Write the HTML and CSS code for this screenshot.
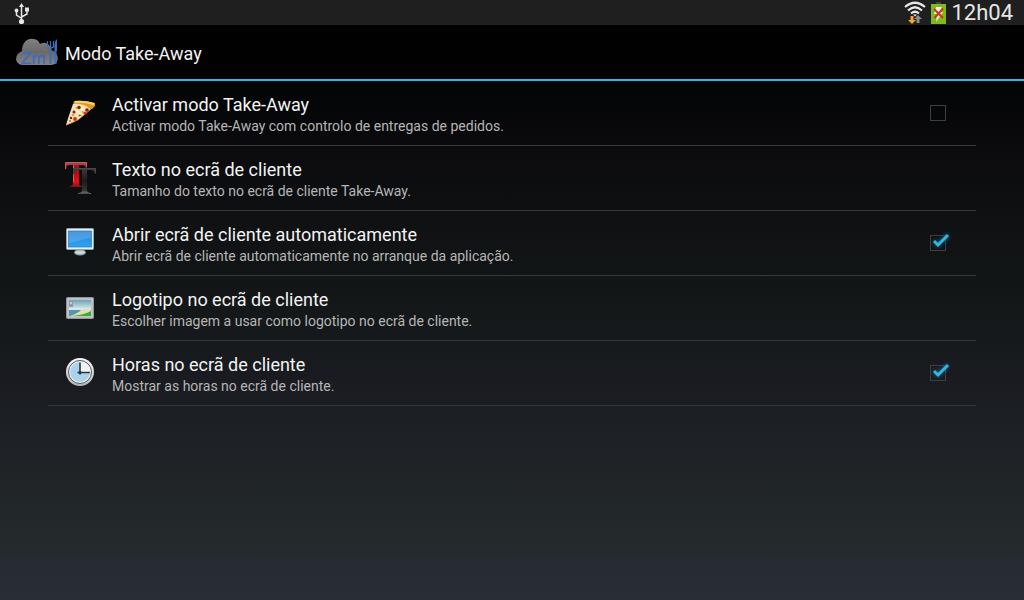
FILE: index.html
```html
<!DOCTYPE html>
<html lang="pt">
<head>
<meta charset="utf-8">
<meta name="viewport" content="width=device-width, initial-scale=1">
<title>Modo Take-Away</title>
<link rel="stylesheet" href="styles.css">
</head>
<body>
<div class="status-bar">
  <svg class="usb" width="16" height="22" viewBox="0 0 16 22" fill="none" stroke="#e6e6e6" stroke-width="1.5" aria-hidden="true">
    <path d="M7.5 3v15M7.5 15.5L2.5 12V8M7.5 14l5.500-3V7"/>
    <path d="M7.500 0l2.500 4H5zM11 4.500h4v4h-4z" fill="#e6e6e6" stroke="none"/>
    <circle cx="2.500" cy="7.500" r="1.900" fill="#e6e6e6" stroke="none"/>
    <circle cx="7.500" cy="18.500" r="2.600" fill="#e6e6e6" stroke="none"/>
  </svg>
  <div class="status-right">
    <svg width="22" height="24" viewBox="0 0 22 24" aria-hidden="true">
      <g fill="none" stroke="#e6e6e6" stroke-width="2.200">
        <path d="M1 6Q11-2.500 21 6M4 9.500Q11 3 18 9.500M7 12.500Q11 9 15 12.500"/>
      </g>
      <path d="M9 13.500h4l-2 2z" fill="#e6e6e6"/>
      <path d="M6.500 15h3v4H12l-4 4-4-4h2.500z" fill="#f2a33c"/>
      <path d="M12.500 22h3v-4H18l-4-4-4 4h2.500z" fill="#8b8b8b"/>
    </svg>
    <svg width="15" height="22" viewBox="0 0 15 22" aria-hidden="true">
      <path d="M5 0h5v3H5z" fill="#444"/>
      <path d="M0 2h15v20H0z" fill="#7fba1c"/>
      <path d="M5 5h6L9 10h3l-7 10 1-8H3z" fill="#e8efda"/>
      <path d="M3 7l9 9M12 6.500L3.500 16" stroke="#d5321b" stroke-width="2"/>
    </svg>
    <time class="clock">12h04</time>
  </div>
</div>
<header class="action-bar">
  <svg class="logo" width="42" height="30" viewBox="0 0 42 30" role="img" aria-label="Zml">
    <defs><linearGradient id="cloud" x1="0" y1="0" x2="0" y2="1"><stop offset="0" stop-color="#808080"/><stop offset=".5" stop-color="#6a6a6a"/><stop offset="1" stop-color="#858585"/></linearGradient></defs>
    <path d="M7 28C-2 28-2 17 6 14C6 5 12 1 17 2Q22 2 24 7Q29 4 33 8Q36 10 35 13C44 15 44 28 35 28Z" fill="url(#cloud)"/>
    <text class="logo-text" x="5" y="27">Zm</text>
    <g fill="none" stroke="#3d6dbb">
      <path d="M34.500 12v15" stroke-width="2"/>
      <path d="M31.500 4v5q0 2 3 2t3-2V4M34.500 4v8" stroke-width="1.200"/>
    </g>
    <path d="M38.500 27V13q-1-8 2.500-11v12H40.500v13z" fill="#3d6dbb"/>
  </svg>
  <h1 class="title">Modo Take-Away</h1>
</header>
<main class="settings">
  <label class="row">
    <svg class="icon" width="32" height="32" viewBox="0 0 32 32" aria-hidden="true">
      <path d="M10 4Q20 3 31 6V9L28 12Q19 8 9 8z" fill="#e19a21"/>
      <path d="M11 5Q20 4 30 7" fill="none" stroke="#fbd469" stroke-width="2"/>
      <path d="M9 7Q19 6 27 12L14 23Q8 26 2 28Q5 18 9 7z" fill="#f6e3ae"/>
      <path d="M2 28Q8 26 15 22L28 11" fill="none" stroke="#e5a13a"/>
      <g fill="#812018"><circle cx="15" cy="10.500" r="1.700"/><circle cx="23" cy="13" r="1.800"/><circle cx="10" cy="15" r="1.500"/><circle cx="16" cy="19" r="1.300"/><circle cx="7" cy="21" r="1.200"/><circle cx="6" cy="24" r=".8"/></g>
      <g fill="#e12c1b"><circle cx="21" cy="16" r="1.600"/><circle cx="11" cy="22" r="1.900"/><circle cx="9" cy="18" r=".8"/></g>
      <path d="M12 14l3 1M17 14l2-3M14 21l3-2" stroke="#fffbe4" stroke-width="1.500"/>
      <path d="M18 14l1 2M12 10l1 2" stroke="#86964b"/>
    </svg>
    <span class="text"><span class="name">Activar modo Take-Away</span><span class="summary">Activar modo Take-Away com controlo de entregas de pedidos.</span></span>
    <span class="check"><input class="box" type="checkbox"><svg class="tick" width="18" height="16" viewBox="0 0 18 16" aria-hidden="true"><path d="M2 8l4 4L16 2"/></svg></span>
  </label>
  <button class="row" type="button">
    <svg class="icon" width="32" height="32" viewBox="0 0 32 32" aria-hidden="true">
      <defs><linearGradient id="red" x1="0" y1="0" x2="0" y2="1"><stop offset="0" stop-color="#8c2226"/><stop offset=".4" stop-color="#b50b12"/><stop offset=".8" stop-color="#ed0d16"/><stop offset="1" stop-color="#7c1216"/></linearGradient>
      <linearGradient id="dark" x1="0" y1="0" x2="0" y2="1"><stop offset="0" stop-color="#3c3c3c"/><stop offset=".5" stop-color="#1b1b1b"/><stop offset=".85" stop-color="#333"/><stop offset="1" stop-color="#777"/></linearGradient></defs>
      <path d="M1 0h22v7h-1q-1-4-4-4h-3v18q0 3 3 3v1H6v-1q3 0 3-3V3H6Q3 3 2 7H1z" fill="url(#red)"/>
      <path d="M1.500 7V.500h21V5M2 2h20M9.500 3v17" fill="none" stroke="#bd6264"/>
      <path d="M9 6h23v6h-1q-1-4-4-4h-4v20q0 3 4 3v1H14v-1q4 0 4-3V8h-4q-3 0-4 4H9z" fill="url(#dark)"/>
      <path d="M9.500 11V6.500h22V11M15 31.500h11" fill="none" stroke="#4c4c4c" stroke-width=".8"/>
    </svg>
    <span class="text"><span class="name">Texto no ecrã de cliente</span><span class="summary">Tamanho do texto no ecrã de cliente Take-Away.</span></span>
  </button>
  <label class="row">
    <svg class="icon" width="32" height="32" viewBox="0 0 32 32" aria-hidden="true">
      <defs><linearGradient id="screen" x1="0" y1="0" x2="0" y2="1"><stop offset="0" stop-color="#2d84d8"/><stop offset="1" stop-color="#2ba2f5"/></linearGradient></defs>
      <path d="M12 22h8l1 3H11z" fill="#8fa9b5"/>
      <ellipse cx="16" cy="25.500" rx="5.500" ry="2.500" fill="#c5d5dc" stroke="#86a0ac"/>
      <rect x="2.500" y="1.500" width="27" height="21" rx="1" fill="#e6eff3" stroke="#8ba5b2"/>
      <rect x="4.500" y="4" width="23" height="16" fill="url(#screen)" stroke="#3478ad" stroke-width=".7"/>
      <path d="M5 16Q15 14 20 12Q24 11 27 11V4.500H5z" fill="#fff" opacity=".15"/>
    </svg>
    <span class="text"><span class="name">Abrir ecrã de cliente automaticamente</span><span class="summary">Abrir ecrã de cliente automaticamente no arranque da aplicação.</span></span>
    <span class="check"><input class="box" type="checkbox" checked><svg class="tick" width="18" height="16" viewBox="0 0 18 16" aria-hidden="true"><path d="M2 8l4 4L16 2"/></svg></span>
  </label>
  <button class="row" type="button">
    <svg class="icon" width="32" height="32" viewBox="0 0 32 32" aria-hidden="true">
      <defs><linearGradient id="sky" x1="0" y1="0" x2="0" y2="1"><stop offset="0" stop-color="#6aa3b4"/><stop offset="1" stop-color="#d6e9ee"/></linearGradient></defs>
      <rect x="2.500" y="5.500" width="27" height="21" rx="1" fill="#bfc0c6" stroke="#93959b"/>
      <path d="M5 8h22v9H5z" fill="url(#sky)"/>
      <path d="M5 17h22v7H5z" fill="#5596aa"/>
      <path d="M5 16h22v2H5z" fill="#d9e8ec"/>
      <path d="M6 24Q15 21 18 17h9v7z" fill="#e3deba"/>
      <path d="M8 24q12-1 19-5v5z" fill="#3fad2f"/>
      <rect x="5" y="9" width="4" height="6" fill="#8d9cab"/><path d="M6 10h2v2H6z" fill="#c2cdd5"/>
    </svg>
    <span class="text"><span class="name">Logotipo no ecrã de cliente</span><span class="summary">Escolher imagem a usar como logotipo no ecrã de cliente.</span></span>
  </button>
  <label class="row">
    <svg class="icon" width="32" height="32" viewBox="0 0 32 32" aria-hidden="true">
      <defs><linearGradient id="rim" x1="0" y1="0" x2="0" y2="1"><stop offset="0" stop-color="#f7f7f7"/><stop offset="1" stop-color="#b5b5b5"/></linearGradient></defs>
      <circle cx="16" cy="15" r="14" fill="url(#rim)"/>
      <circle cx="16" cy="15" r="11.500" fill="#eef3f6" stroke="#53585c"/>
      <circle cx="16" cy="15" r="10" fill="#a9d2ee"/>
      <path d="M16 4.500a10.500 10.500 0 0 1 10.500 10.500H16z" fill="#f0f2f3"/>
      <path d="M16 5.500v12M13.500 15.500H26" fill="none" stroke="#33373a" stroke-width="1.600"/><circle cx="16" cy="15.500" r="1.600" fill="#333"/>
    </svg>
    <span class="text"><span class="name">Horas no ecrã de cliente</span><span class="summary">Mostrar as horas no ecrã de cliente.</span></span>
    <span class="check"><input class="box" type="checkbox" checked><svg class="tick" width="18" height="16" viewBox="0 0 18 16" aria-hidden="true"><path d="M2 8l4 4L16 2"/></svg></span>
  </label>
</main>
</body>
</html>
```

FILE: styles.css
```css
* { box-sizing: border-box; }
body {
  margin: 0;
  min-height: 100vh;
  background: linear-gradient(#000 0%, #030405 14%, #0b0b0d 25%, #141819 52%, #191b20 63%, #1e2226 74%, #24292b 90%, #272b33 94%, #292d35 100%);
  color: #f3f3f3;
  font-family: Roboto, "Noto Sans", sans-serif;
}
.status-bar {
  display: flex;
  align-items: center;
  justify-content: space-between;
  height: 25px;
  padding: 0 11px 0 14px;
  background: #1f1f1f;
}
.usb { margin-top: 2px; }
.status-right { display: flex; align-items: center; gap: 5px; }
.clock { font-size: 22px; line-height: 25px; color: #e6e6e6; }
.action-bar {
  display: flex;
  align-items: center;
  gap: 7px;
  height: 56px;
  padding: 0 16px;
  border-bottom: 2px solid #33b5e5;
  background: #010101;
}
.logo-text { font: 17px "Liberation Sans", sans-serif; fill: #3d6dbb; stroke: #3d6dbb; stroke-width: 0.4px; }
.title { margin: 0; padding-top: 4px; font-size: 18px; font-weight: 400; line-height: 24px; }
.settings { padding: 0 48px; }
.row {
  display: flex;
  align-items: center;
  gap: 16px;
  width: 100%;
  min-height: 65px;
  padding: 0 28px 0 16px;
  border: 0;
  border-bottom: 1px solid #36383a;
  background: none;
  color: inherit;
  font: inherit;
  text-align: left;
}
.icon { flex: none; overflow: visible; }
.text { display: flex; flex: 1; flex-direction: column; padding-top: 2px; }
.name { font-size: 18px; line-height: 24px; }
.summary { font-size: 14px; line-height: 18px; color: #b6b6b6; }
.check { position: relative; display: flex; padding-right: 2px; }
.box {
  appearance: none;
  width: 16px;
  height: 16px;
  margin: 0;
  border: 1px solid #3e3f41;
}
.tick {
  position: absolute;
  top: -2px;
  left: 2px;
  display: none;
  fill: none;
  stroke: #33b5e5;
  stroke-width: 3;
  filter: drop-shadow(0 0 2px #16789c);
}
.box:checked + .tick { display: block; }
```
